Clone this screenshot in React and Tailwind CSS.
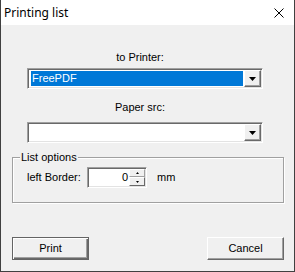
import React from 'react';

// Klassischer Win32-Druckdialog "Printing list"
const font = { fontFamily: '"Liberation Sans", Arial, sans-serif' };

function DropArrow() {
  return (
    <div className="w-[17px] h-[17px] bg-[#f0f0f0] border border-t-white border-l-white border-b-[#696969] border-r-[#696969] shadow-[inset_-1px_-1px_0_#a0a0a0] flex items-center justify-center">
      <svg width="7" height="4" viewBox="0 0 7 4">
        <path d="M0 0h7L3.5 4z" fill="#000" />
      </svg>
    </div>
  );
}

function Combo({ value }) {
  return (
    <div className="ml-[26px] w-[236px] h-[21px] bg-white border border-t-[#a0a0a0] border-l-[#a0a0a0] border-b-white border-r-white shadow-[inset_1px_1px_0_#696969,inset_-1px_-1px_0_#e3e3e3] flex items-center pl-[2px] pr-[1px]">
      <div className="flex-1 h-[15px] mr-[1px] flex items-center pl-[1px]">
        {value ? (
          <div className="w-full h-full bg-[#0078d7] text-white text-[11px] leading-[15px] pl-[1px]">{value}</div>
        ) : null}
      </div>
      <DropArrow />
    </div>
  );
}

function SpinEdit() {
  return (
    <div className="w-[60px] h-[21px] bg-white border border-t-[#a0a0a0] border-l-[#a0a0a0] border-b-white border-r-white shadow-[inset_1px_1px_0_#696969,inset_-1px_-1px_0_#e3e3e3] flex items-center pl-[2px] pr-[1px]">
      <div className="flex-1 text-right text-[11px] leading-[13px] pr-[1px]">0</div>
      <div className="flex flex-col w-[16px] h-[17px]">
        <div className="h-[8px] bg-[#f0f0f0] border border-t-white border-l-white border-b-[#a0a0a0] border-r-[#a0a0a0] flex items-center justify-center">
          <svg width="3" height="2" viewBox="0 0 3 2"><path d="M1.5 0L3 2H0z" fill="#000" /></svg>
        </div>
        <div className="h-[9px] bg-[#f0f0f0] border border-t-white border-l-white border-b-[#696969] border-r-[#696969] flex items-center justify-center">
          <svg width="3" height="2" viewBox="0 0 3 2"><path d="M0 0h3L1.5 2z" fill="#000" /></svg>
        </div>
      </div>
    </div>
  );
}

export default function App() {
  return (
    <div className="w-[295px] h-[272px] flex flex-col border-l border-r border-b border-[#404040] text-black" style={font}>
      {/* Titelleiste */}
      <div className="h-[25px] bg-white flex items-center justify-between pl-[3px] pr-[10px] shrink-0">
        <span className="text-[12px]" style={{ fontFamily: '"Noto Sans", sans-serif' }}>Printing list</span>
        <svg width="10" height="10" viewBox="0 0 10 10">
          <path d="M0.5 0.5l9 9M9.5 0.5l-9 9" stroke="#000" strokeWidth="1" />
        </svg>
      </div>

      <div className="flex-1 bg-[#f0f0f0] flex flex-col">
        <div className="mt-[26px] ml-[26px] w-[226px] text-center text-[11px] leading-[13px]">to Printer:</div>
        <div className="mt-[4px]">
          <Combo value="FreePDF" />
        </div>

        <div className="mt-[12px] ml-[26px] w-[226px] text-center text-[11px] leading-[13px]">Paper src:</div>
        <div className="mt-[8px]">
          <Combo />
        </div>

        {/* Gruppe: List options */}
        <div className="relative mt-[14px] ml-[11px] w-[272px] h-[46px] border border-[#a0a0a0] shadow-[1px_1px_0_#fff,inset_1px_1px_0_#fff]">
          <span className="absolute -top-[7px] left-[7px] px-[1px] bg-[#f0f0f0] text-[11px] leading-[13px]">List options</span>
          <div className="flex items-center mt-[9px] ml-[14px]">
            <span className="text-[11px] leading-[13px] w-[60px]">left Border:</span>
            <SpinEdit />
            <span className="ml-[10px] text-[11px] leading-[13px]">mm</span>
          </div>
        </div>

        {/* Schaltflächen */}
        <div className="mt-[34px] flex justify-between ml-[11px] mr-[10px]">
          <button className="w-[77px] h-[23px] bg-[#f0f0f0] border border-[#646464] shadow-[inset_1px_1px_0_#fff,inset_-1px_-1px_0_#696969,inset_-2px_-2px_0_#a0a0a0] text-[11px]">
            Print
          </button>
          <button className="w-[77px] h-[23px] bg-[#f0f0f0] border border-t-white border-l-white border-b-[#696969] border-r-[#696969] shadow-[inset_-1px_-1px_0_#a0a0a0] text-[11px]">
            Cancel
          </button>
        </div>
      </div>
    </div>
  );
}
